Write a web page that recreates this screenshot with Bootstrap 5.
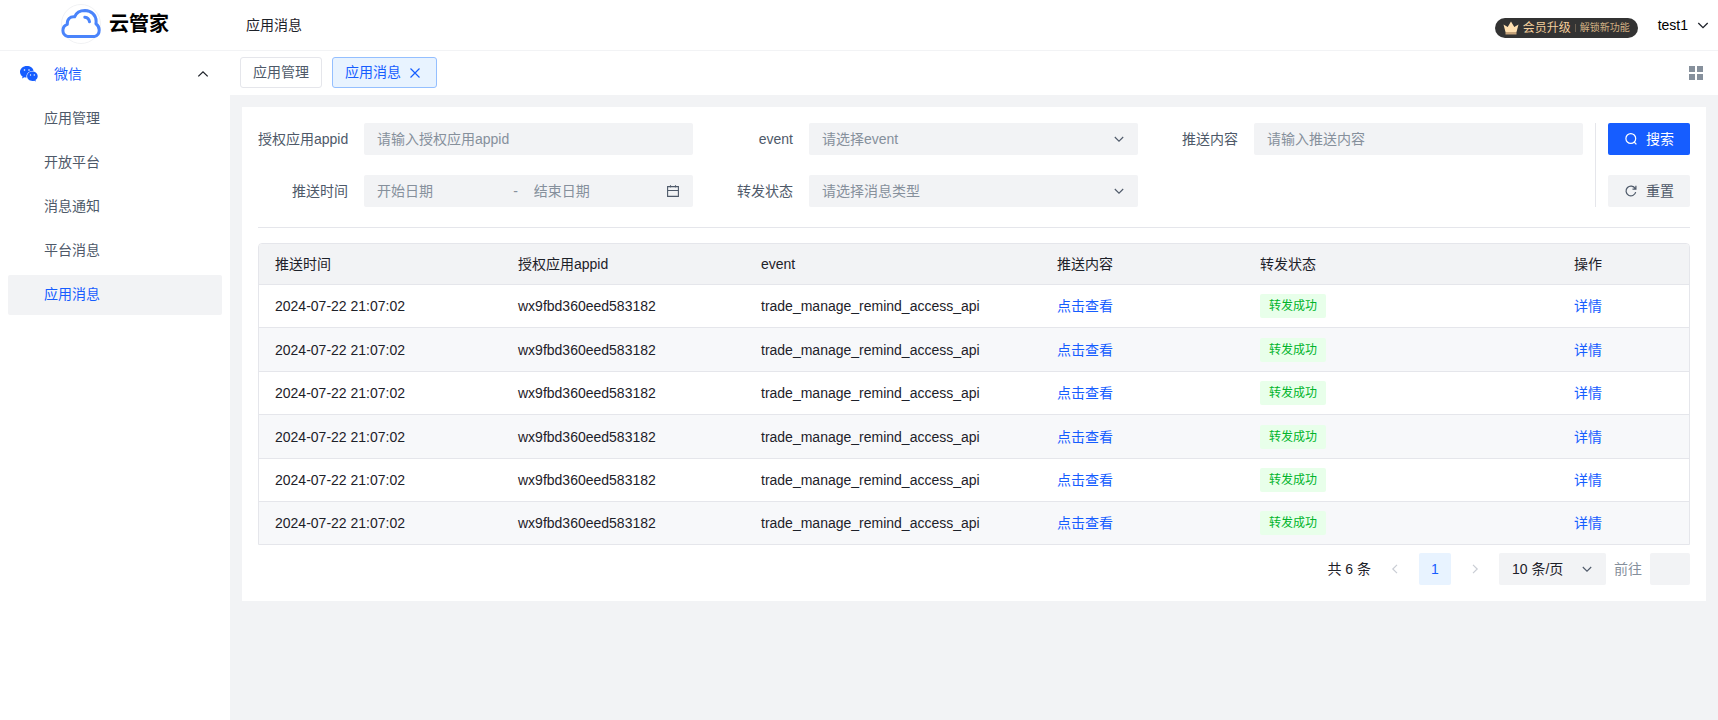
<!DOCTYPE html>
<html lang="zh-CN">
<head>
<meta charset="utf-8">
<meta name="viewport" content="width=device-width, initial-scale=1">
<title>应用消息 - 云管家</title>
<link href="https://cdn.jsdelivr.net/npm/bootstrap@5.3.0/dist/css/bootstrap.min.css" rel="stylesheet">
<style>
  :root { --ink: #1d2129; --ink2: #4e5969; --ink3: #86909c; --fill: #f2f3f5; --line: #e5e6eb; --blue: #165dff; --blue-soft: #e8f3ff; }
  body { font-family: "Liberation Sans", "Noto Sans CJK SC", sans-serif; font-size: 14px; line-height: 22px; color: var(--ink); background: #fff; }
  a { color: var(--blue); text-decoration: none; }
  svg { display: block; flex: none; }
  .topbar { height: 51px; border-bottom: 1px solid var(--fill); }
  .brand { width: 230px; padding-bottom: 2px; color: #000; font-size: 20px; font-weight: 700; line-height: 40px; }
  .vip { height: 20px; border-radius: 10px; background: #333; color: #f4ce9b; font-size: 12px; line-height: 20px; padding: 0 8px; margin-top: 6px; }
  .vip .sub { font-size: 10px; color: #d2b083; }
  .vip .bar { width: 1px; height: 8px; background: #6b5f50; margin: 0 4px; }
  .user { font-size: 14px; color: #000; }
  .side { width: 230px; padding: 4px 8px; flex: none; }
  .side .nav { gap: 4px; }
  .side .nav-link { height: 40px; line-height: 22px; padding: 8px 12px 10px 36px; color: var(--ink2); border-radius: 2px; }
  .side .nav-link.active { background: var(--fill); color: var(--blue); }
  .side .group { padding-left: 10px; padding-right: 12px; gap: 14px; color: var(--blue); }
  .main { background: var(--fill); min-width: 0; }
  .tabs { height: 44px; padding: 6px 15px 7px 10px; background: #fff; gap: 10px; }
  .tab { height: 31px; padding: 0 12px; border: 1px solid var(--line); border-radius: 3px; background: #fff; color: var(--ink2); line-height: 29px; }
  .tab.on { border-color: #94bfff; background: var(--blue-soft); color: var(--blue); padding-right: 15px; }
  .panel { margin: 12px; padding: 16px; background: #fff; }
  .filters { --bs-gutter-x: 10px; --bs-gutter-y: 20px; }
  .filters label { width: 90px; text-align: right; color: var(--ink2); white-space: nowrap; flex: none; }
  .box, .box.form-control, .box.form-select { height: 32px; font-size: 14px; line-height: 22px; padding: 4px 12px; border: 1px solid transparent; border-radius: 2px; background-color: var(--fill); background-clip: border-box; color: var(--ink); min-width: 0; }
  .box.form-select { padding-right: 32px; background-size: 12px 12px; background-position: right 12px center;
    background-image: url("data:image/svg+xml,%3Csvg xmlns='http://www.w3.org/2000/svg' viewBox='0 0 12 12'%3E%3Cpath d='M1.8 4 6 8.2 10.2 4' fill='none' stroke='%234e5969' stroke-width='1.1'/%3E%3C/svg%3E"); }
  .box.form-select.unset, .unset { color: var(--ink3); }
  .box::placeholder, .box input::placeholder { color: var(--ink3); opacity: 1; }
  .box input { border: 0; padding: 0; background: none; width: 120px; min-width: 0; flex: 1 1 120px; outline: 0; }
  .range svg { margin-left: 12px; }
  .acts { border-left: 1px solid var(--line); padding-left: 12px; margin-left: 12px; gap: 20px; }
  .act { width: 82px; height: 32px; border: 0; border-radius: 2px; padding: 0; font-size: 14px; gap: 8px; background: var(--fill); color: var(--ink2); }
  .act.go { background: var(--blue); color: #fff; }
  .rule { height: 1px; background: var(--line); margin: 20px 0 15px; }
  .frame { border: 1px solid var(--line); border-radius: 4px 4px 0 0; overflow: hidden; margin-bottom: 8px; }
  .records { table-layout: fixed; border-collapse: separate; border-spacing: 0; margin: 0; color: var(--ink); }
  .records th, .records td { padding: 0 16px; border: 0; border-bottom: 1px solid var(--line); font-weight: 400; line-height: 22px; vertical-align: middle; color: var(--ink); box-shadow: none; background: none; white-space: nowrap; }
  .records th { height: 41px; background: var(--fill); }
  .records td { height: 43px; }
  .records tbody tr:nth-child(even) { background: #f7f8fa; }
  .records tbody tr:nth-child(even) td { height: 44px; }
  .records tbody tr:last-child td { border-bottom: 0; height: 42px; }
  .status { display: block; width: max-content; height: 24px; line-height: 24px; padding: 0 9px; border-radius: 2px; background: #e8ffea; color: #00b42a; font-size: 12px; }
  .pages { gap: 8px; }
  .page-btn { width: 32px; height: 32px; border: 0; border-radius: 2px; background: none; padding: 0; color: #c9cdd4; }
  .page-btn.on { background: var(--blue-soft); color: var(--blue); }
  .box.per { width: 107px; }
  .box.jump { width: 40px; }
</style>
<script src="https://cdn.jsdelivr.net/npm/bootstrap@5.3.0/dist/js/bootstrap.bundle.min.js"></script>
</head>
<body>
<div class="d-flex flex-column min-vh-100">
  <header class="topbar d-flex align-items-center">
    <a href="#" class="brand d-flex align-items-center justify-content-center gap-2">
      <svg width="40" height="40" viewBox="0 0 40 40" fill="none" aria-hidden="true">
        <circle cx="20" cy="20" r="19.5" stroke="#f1f2f4"/>
        <path d="M7 32.600C4 31.800 1.900 29.500 1.900 26.500c0-3 1.500-5.200 4.400-6.200C5.900 15.400 9 12.300 13.600 12.800 15.500 8.300 19 6.500 24 6.500c6.500.2 11 4.600 11.100 10.600.1 1.200 0 1.800-.2 2.700 2 1.500 3.300 3.600 3.300 6.200 0 3.500-2 6-4.900 6.600z" stroke="#4a84fb" stroke-width="3" stroke-linejoin="round"/>
        <path d="M23.800 13.300c2.500.3 4.300 1.900 4.700 4.500" stroke="#4a84fb" stroke-width="3" stroke-linecap="round"/>
      </svg>
      <span>云管家</span>
    </a>
    <span class="ms-3">应用消息</span>
    <a href="#" class="vip ms-auto d-flex align-items-center">
      <svg class="me-1" width="16" height="14" viewBox="0 0 16 14" aria-hidden="true"><path d="M.5 3.500 4.700 6 8 .600 11.300 6l4.200-2.500L13.500 11h-11z" fill="#ffe0b0"/><path d="M2.500 11h11v2.500h-11z" fill="#c5a37a"/></svg>
      <span>会员升级</span><span class="bar"></span><span class="sub">解锁新功能</span>
    </a>
    <a href="#" class="user d-flex align-items-center ps-3 ms-1 pe-2">
      <span class="me-2">test1</span>
      <svg width="14" height="14" viewBox="0 0 14 14" fill="none" stroke="#1d2129" stroke-width="1.300" aria-hidden="true"><path d="M2.300 5 7 9.600 11.700 5"/></svg>
    </a>
  </header>

  <div class="d-flex flex-grow-1">
    <aside class="side">
      <nav class="nav flex-column flex-nowrap">
        <a href="#" class="nav-link group d-flex align-items-center">
          <svg width="22" height="18" viewBox="0 0 22 18" aria-hidden="true">
            <path fill="#165dff" d="M9 1C4.900 1 2 3.700 2 6.900c0 1.900 1 3.500 2.600 4.600L4 13.500l2.400-1.200c.8.200 1.500.3 2.200.3-.8-3.800 2.200-6.800 7-6.800C15 3 12.300 1 9 1z"/>
            <path fill="#165dff" d="M19.700 11.300c0-2.700-2.500-4.700-5.300-4.700-3.100 0-5.300 2.100-5.300 4.700s2.300 4.700 5.300 4.700c.6 0 1.200-.1 1.800-.3l1.700.9-.4-1.500c1.300-.9 2.200-2.300 2.200-3.800z"/>
            <g fill="#fff"><circle cx="6.500" cy="5" r=".8"/><circle cx="11" cy="5" r=".8"/><circle cx="12.500" cy="10" r=".7"/><circle cx="16.300" cy="10" r=".7"/></g>
          </svg>
          <span class="me-auto">微信</span>
          <svg width="14" height="14" viewBox="0 0 14 14" fill="none" stroke="#1d2129" stroke-width="1.300" aria-hidden="true"><path d="M2.300 9.400 7 4.800l4.700 4.600"/></svg>
        </a>
        <a href="#" class="nav-link">应用管理</a>
        <a href="#" class="nav-link">开放平台</a>
        <a href="#" class="nav-link">消息通知</a>
        <a href="#" class="nav-link">平台消息</a>
        <a href="#" class="nav-link active">应用消息</a>
      </nav>
    </aside>

    <main class="main flex-grow-1">
      <div class="tabs d-flex align-items-center">
        <button type="button" class="tab">应用管理</button>
        <button type="button" class="tab on d-flex align-items-center gap-2">应用消息
          <svg width="12" height="12" viewBox="0 0 12 12" fill="none" stroke="#165dff" stroke-width="1.200" aria-hidden="true"><path d="m1.500 1.500 9 9m0-9-9 9"/></svg>
        </button>
        <button type="button" class="btn p-0 border-0 ms-auto" aria-label="视图">
          <svg width="14" height="14" viewBox="0 0 14 14" fill="#86909c"><path d="M0 0h6v6H0zM8 0h6v6H8zM0 8h6v6H0zM8 8h6v6H8z"/></svg>
        </button>
      </div>

      <section class="panel">
        <form class="d-flex">
          <div class="flex-grow-1">
            <div class="row filters">
              <div class="col-4 d-flex align-items-center gap-3"><label for="appid">授权应用appid</label><input id="appid" class="form-control box" placeholder="请输入授权应用appid"></div>
              <div class="col-4 d-flex align-items-center gap-3"><label for="event">event</label><select id="event" class="form-select box unset"><option>请选择event</option></select></div>
              <div class="col-4 d-flex align-items-center gap-3"><label for="content">推送内容</label><input id="content" class="form-control box" placeholder="请输入推送内容"></div>
              <div class="col-4 d-flex align-items-center gap-3"><label for="from">推送时间</label>
                <div class="box range d-flex align-items-center flex-grow-1">
                  <input id="from" placeholder="开始日期"><span class="unset px-3">-</span><input placeholder="结束日期" aria-label="结束日期">
                  <svg width="14" height="14" viewBox="0 0 14 14" fill="none" stroke="#4e5969" stroke-width="1.100" aria-hidden="true"><path d="M1.600 2.600h10.800v9.800H1.600zM1.600 6.500h10.800M4.500 1.200v2.300M9.500 1.200v2.300"/></svg>
                </div>
              </div>
              <div class="col-4 d-flex align-items-center gap-3"><label for="state">转发状态</label><select id="state" class="form-select box unset"><option>请选择消息类型</option></select></div>
            </div>
          </div>
          <div class="acts d-flex flex-column">
            <button type="button" class="act go d-flex align-items-center justify-content-center">
              <svg width="14" height="14" viewBox="0 0 14 14" fill="none" stroke="#fff" stroke-width="1.200" aria-hidden="true"><circle cx="6.800" cy="6.500" r="4.900"/><path d="m10.200 10 2.200 2.300"/></svg>搜索</button>
            <button type="reset" class="act d-flex align-items-center justify-content-center">
              <svg width="14" height="14" viewBox="0 0 14 14" fill="none" stroke="#4e5969" stroke-width="1.200" aria-hidden="true"><path d="M11.700 8.200A4.900 4.900 0 1 1 11.200 4.500M11.900 1.700v3.500H8.500"/></svg>重置</button>
          </div>
        </form>

        <div class="rule"></div>

        <div class="frame">
          <table class="table records">
            <colgroup><col style="width:243px"><col style="width:243px"><col style="width:296px"><col style="width:203px"><col style="width:314px"><col style="width:131px"></colgroup>
            <thead><tr><th scope="col">推送时间</th><th scope="col">授权应用appid</th><th scope="col">event</th><th scope="col">推送内容</th><th scope="col">转发状态</th><th scope="col">操作</th></tr></thead>
            <tbody>
              <tr><td>2024-07-22 21:07:02</td><td>wx9fbd360eed583182</td><td>trade_manage_remind_access_api</td><td><a href="#">点击查看</a></td><td><span class="status">转发成功</span></td><td><a href="#">详情</a></td></tr>
              <tr><td>2024-07-22 21:07:02</td><td>wx9fbd360eed583182</td><td>trade_manage_remind_access_api</td><td><a href="#">点击查看</a></td><td><span class="status">转发成功</span></td><td><a href="#">详情</a></td></tr>
              <tr><td>2024-07-22 21:07:02</td><td>wx9fbd360eed583182</td><td>trade_manage_remind_access_api</td><td><a href="#">点击查看</a></td><td><span class="status">转发成功</span></td><td><a href="#">详情</a></td></tr>
              <tr><td>2024-07-22 21:07:02</td><td>wx9fbd360eed583182</td><td>trade_manage_remind_access_api</td><td><a href="#">点击查看</a></td><td><span class="status">转发成功</span></td><td><a href="#">详情</a></td></tr>
              <tr><td>2024-07-22 21:07:02</td><td>wx9fbd360eed583182</td><td>trade_manage_remind_access_api</td><td><a href="#">点击查看</a></td><td><span class="status">转发成功</span></td><td><a href="#">详情</a></td></tr>
              <tr><td>2024-07-22 21:07:02</td><td>wx9fbd360eed583182</td><td>trade_manage_remind_access_api</td><td><a href="#">点击查看</a></td><td><span class="status">转发成功</span></td><td><a href="#">详情</a></td></tr>
            </tbody>
          </table>
        </div>

        <div class="pages d-flex align-items-center justify-content-end">
          <span>共 6 条</span>
          <button type="button" class="page-btn d-flex align-items-center justify-content-center" aria-label="上一页"><svg width="12" height="12" viewBox="0 0 12 12" fill="none" stroke="currentColor" stroke-width="1.200"><path d="M8 1.800 3.800 6 8 10.200"/></svg></button>
          <button type="button" class="page-btn on">1</button>
          <button type="button" class="page-btn d-flex align-items-center justify-content-center" aria-label="下一页"><svg width="12" height="12" viewBox="0 0 12 12" fill="none" stroke="currentColor" stroke-width="1.200"><path d="M4 1.800 8.200 6 4 10.200"/></svg></button>
          <select class="form-select box per" aria-label="每页条数"><option>10 条/页</option></select>
          <label for="jump" class="unset">前往</label>
          <input id="jump" class="form-control box jump">
        </div>
      </section>
    </main>
  </div>
</div>
</body>
</html>
